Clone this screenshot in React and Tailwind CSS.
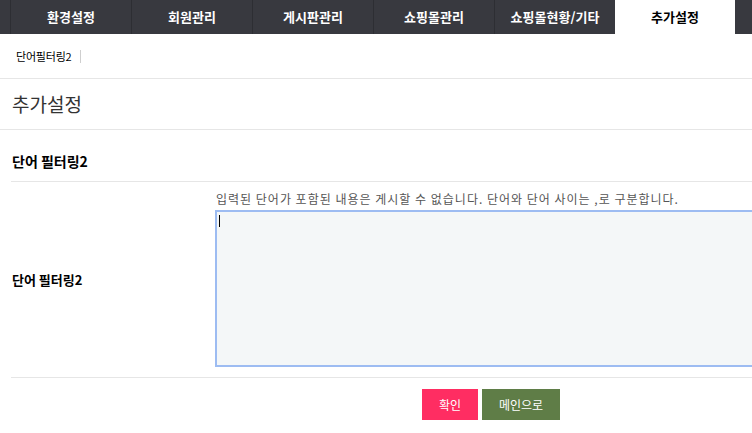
import { useState } from "react";

const tabs = ["환경설정", "회원관리", "게시판관리", "쇼핑몰관리", "쇼핑몰현황/기타", "추가설정"];

function App() {
  const [words, setWords] = useState("");

  return (
    <div
      className="w-[752px] h-[433px] overflow-hidden bg-white text-[#333]"
      style={{ fontFamily: '"Noto Sans CJK KR", "Noto Sans", sans-serif' }}
    >
      {/* top menu */}
      <nav className="flex h-[34px] bg-[#38393f] pl-[10px]">
        {tabs.map((tab) => (
          <div
            key={tab}
            className={
              tab === "추가설정"
                ? "w-[120px] shrink-0 flex items-center justify-center bg-white text-black text-[13px] font-bold"
                : "w-[121px] shrink-0 flex items-center justify-center border-l border-[#2d2e33] text-white text-[13px] font-bold"
            }
          >
            {tab}
          </div>
        ))}
      </nav>

      {/* sub menu */}
      <div className="flex items-center h-[45px] pl-[16px] border-b border-[#e6e6e6]">
        <span className="text-[11px] text-black leading-none tracking-[-0.2px]">단어필터링2</span>
        <span className="ml-[8px] w-px h-[13px] bg-[#cfcfcf]" />
      </div>

      <h1 className="h-[51px] flex items-center text-[19px] font-normal text-[#333] border-b border-[#e6e6e6] pl-[12px] pt-[1px]">
        추가설정
      </h1>

      <div className="ml-[11px] w-[960px]">
        <h2 className="h-[52px] flex items-center pt-[12px] text-[14px] font-bold text-black border-b border-[#e6e6e6] pl-[1px]">
          단어 필터링2
        </h2>

        <div className="flex border-b border-[#e6e6e6]">
          <div className="w-[204px] shrink-0 flex items-center pl-[1px] text-[13px] font-bold text-black pt-[1px]">
            단어 필터링2
          </div>
          <div className="flex-1 pt-[7px] pb-[10px]">
            <p className="text-[12px] text-[#555] leading-[20px] pl-[1px] mb-[1px] tracking-[1px]">
              입력된 단어가 포함된 내용은 게시할 수 없습니다. 단어와 단어 사이는 ,로 구분합니다.
            </p>
            <div className="relative w-[700px]">
              <textarea
                value={words}
                onChange={(e) => setWords(e.target.value)}
                className="block w-full h-[157px] bg-[#f4f7f8] border-2 border-[#9dbcf2] outline-none resize-none px-[3px] py-[2px] text-[12px]"
              />
              <span className="absolute left-[4px] top-[5px] w-px h-[12px] bg-black" />
            </div>
          </div>
        </div>

        <div className="flex justify-center gap-[4px] pt-[11px]">
          <button className="w-[56px] h-[31px] bg-[#ff2d62] text-white text-[12px]">확인</button>
          <button className="w-[78px] h-[31px] bg-[#5f7d47] text-white text-[12px]">메인으로</button>
        </div>
      </div>
    </div>
  );
}

export default App;
